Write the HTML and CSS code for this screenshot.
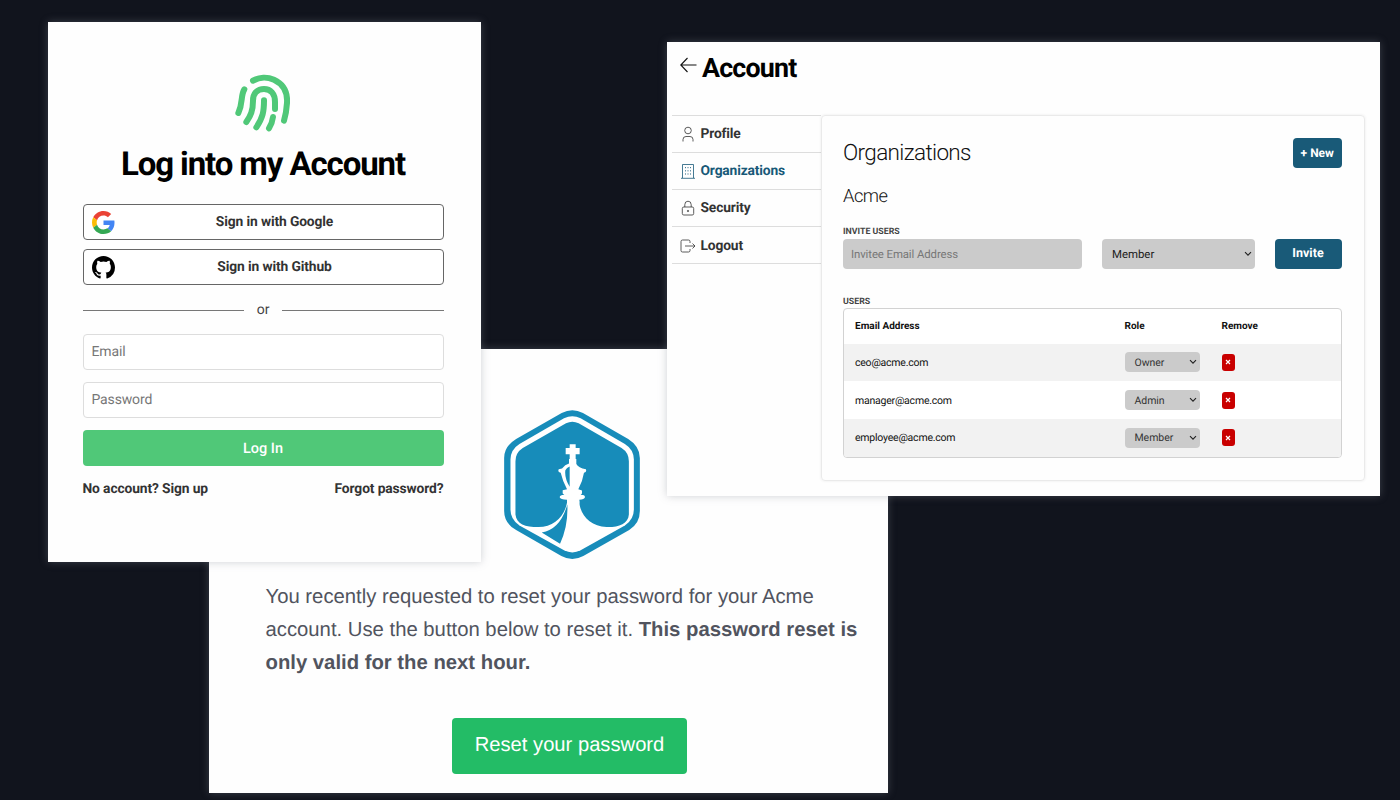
FILE: index.html
```html
<!DOCTYPE html>
<html lang="en">
<head>
<meta charset="utf-8">
<title>Account</title>
<link rel="stylesheet" href="styles.css">
</head>
<body>
<main class="canvas">
  <section class="window email">
    <svg class="email-logo" viewBox="40 28 412 454" aria-hidden="true">
      <path fill="#178cba" d="M215 40Q247 24 279 40L415 118Q450 140 450 175V335Q450 372 418 392L280 470Q247 488 214 470L78 392Q42 372 42 335V175Q42 140 78 118Z"/>
      <path fill="#fff" d="M222 56Q247 44 272 56L405 133Q432 150 432 180V330Q432 360 405 378L272 453Q247 466 222 453L88 378Q61 360 61 330V180Q61 150 88 133Z"/>
      <path fill="#178cba" d="M228 71Q247 61 266 71L395 145Q417 159 417 185V345C415 374 385 384 350 383C300 381 268 345 268 303H232C226 350 193 383 145 383C105 383 79 374 76 345V185Q76 159 98 145Z"/>
      <path fill="#fff" d="M239 134H257V145H269V164H257V178H259V193Q265 205 288 209Q291 217 282 220Q278 246 265 269L276 273V282L272 286Q285 286 285 293Q283 300 268 301V312H231V301Q211 300 209 293Q209 287 223 286L218 282V272L231 269Q218 246 212 220Q202 217 206 209L216 207Q225 195 237 192V178H239V164H227V145H239Z"/>
      <path fill="#178cba" d="M239 201V262Q223 235 226 212Q230 204 239 201ZM155 399Q211 390 232 315Q235 380 210 433Z"/>
    </svg>
    <p class="email-text">You recently requested to reset your password for your Acme<br>account. Use the button below to reset it. <strong>This password reset is<br>only valid for the next hour.</strong></p>
    <button class="reset">Reset your password</button>
  </section>

  <section class="window login">
    <svg class="fingerprint" viewBox="43 25 165 180" fill="none" stroke="#50c878" stroke-width="18" stroke-linecap="round" aria-hidden="true">
      <path d="M97 48C115 37 140 36 160 45C190 59 201 86 199 115Q197 145 190 168M71 74C59 94 68 112 53 145M163 133V112C163 87 150 73 130 73C108 73 97 88 97 108C97 138 90 153 77 172M130 107C130 140 127 158 107 188M157 157Q155 174 145 191"/>
    </svg>
    <h1 class="login-title">Log into my Account</h1>
    <button class="provider">
      <svg class="provider-icon" viewBox="0 0 48 48"><path fill="#ea4335" d="M24 9.5c3.54 0 6.71 1.22 9.21 3.6l6.85-6.85C35.9 2.38 30.47 0 24 0 14.62 0 6.51 5.38 2.56 13.22l7.98 6.19C12.43 13.72 17.74 9.5 24 9.5z"/><path fill="#4285f4" d="M46.98 24.55c0-1.57-.15-3.09-.38-4.55H24v9.02h12.94c-.58 2.96-2.26 5.48-4.78 7.18l7.73 6c4.51-4.18 7.09-10.36 7.09-17.65z"/><path fill="#fbbc05" d="M10.53 28.59A14.5 14.5 0 0 1 9.77 24c0-1.6.27-3.14.76-4.59l-7.98-6.19A23.9 23.9 0 0 0 0 24c0 3.88.92 7.54 2.56 10.78z"/><path fill="#34a853" d="M24 48c6.48 0 11.93-2.13 15.89-5.81l-7.73-6c-2.15 1.45-4.92 2.3-8.16 2.3-6.26 0-11.57-4.22-13.47-9.91l-7.98 6.19C6.51 42.62 14.62 48 24 48z"/></svg>
      <span>Sign in with Google</span>
    </button>
    <button class="provider">
      <svg class="provider-icon" viewBox="0 0 16 16"><path d="M8 0C3.58 0 0 3.58 0 8c0 3.54 2.29 6.53 5.47 7.59.4.07.55-.17.55-.38 0-.19-.01-.82-.01-1.49-2.01.37-2.53-.49-2.69-.94-.09-.23-.48-.94-.82-1.13-.28-.15-.68-.52-.01-.53.63-.01 1.08.58 1.23.82.72 1.21 1.87.87 2.33.66.07-.52.28-.87.51-1.07-1.78-.2-3.64-.89-3.64-3.95 0-.87.31-1.59.82-2.15-.08-.2-.36-1.02.08-2.12 0 0 .67-.21 2.2.82a7.6 7.6 0 0 1 4 0c1.53-1.04 2.2-.82 2.2-.82.44 1.1.16 1.92.08 2.12.51.56.82 1.27.82 2.15 0 3.07-1.87 3.75-3.65 3.95.29.25.54.73.54 1.48 0 1.07-.01 1.93-.01 2.2 0 .21.15.46.55.38A8.01 8.01 0 0 0 16 8c0-4.42-3.58-8-8-8z"/></svg>
      <span>Sign in with Github</span>
    </button>
    <div class="divider">or</div>
    <input class="field" placeholder="Email">
    <input class="field" placeholder="Password" type="password">
    <button class="submit">Log In</button>
    <div class="login-links"><a>No account? Sign up</a><a>Forgot password?</a></div>
  </section>

  <section class="window account">
    <header class="account-head">
      <svg class="back" viewBox="0 0 17 16" fill="none" stroke="#111" stroke-width="1.1"><path d="M16.5 8H1M7.5 1L.8 8l6.7 7"/></svg>
      <h2 class="account-title">Account</h2>
    </header>
    <div class="account-body">
      <nav class="menu">
        <a class="menu-item"><svg class="menu-icon" viewBox="0 0 16 16"><circle cx="8" cy="4.5" r="3.3"/><path d="M3 15.5v-2q0-3 3-3h4q3 0 3 3v2"/></svg>Profile</a>
        <a class="menu-item active"><svg class="menu-icon" viewBox="0 0 16 16"><path d="M2.5 15V1.5h11V15M1 15.3h14"/><path stroke-dasharray="1.2 2" d="M5.5 4v9M8 4v9M10.5 4v9"/></svg>Organizations</a>
        <a class="menu-item"><svg class="menu-icon" viewBox="0 0 16 16"><rect x="2.3" y="7" width="11.4" height="8" rx="1.5"/><path d="M4.8 7V4.7q0-3.5 3.2-3.5t3.2 3.5V7"/><circle cx="8" cy="11" r=".7"/></svg>Security</a>
        <a class="menu-item"><svg class="menu-icon" viewBox="0 0 16 16"><path d="M10 5V3.500Q10 2 8.500 2H2.500Q1 2 1 3.500V12.500Q1 14 2.500 14h6Q10 14 10 12.500V11M5 8h10M12.500 5.500L15 8l-2.500 2.500"/></svg>Logout</a>
      </nav>
      <div class="panel">
        <div class="panel-head"><h3 class="panel-title">Organizations</h3><button class="primary new">+ New</button></div>
        <h4 class="org-name">Acme</h4>
        <div class="label">INVITE USERS</div>
        <div class="invite">
          <input class="invite-email" placeholder="Invitee Email Address">
          <div class="select">Member<svg class="chevron" viewBox="0 0 8 6"><path d="M1 1.200l3 3 3-3"/></svg></div>
          <button class="primary send">Invite</button>
        </div>
        <div class="label users-label">USERS</div>
        <div class="table">
          <div class="row head"><span>Email Address</span><span>Role</span><span>Remove</span></div>
          <div class="row shaded"><span>ceo@acme.com</span><div class="select small">Owner<svg class="chevron" viewBox="0 0 8 6"><path d="M1 1.200l3 3 3-3"/></svg></div><button class="remove"><svg viewBox="0 0 6 6"><path d="M1 1l4 4M5 1L1 5"/></svg></button></div>
          <div class="row"><span>manager@acme.com</span><div class="select small">Admin<svg class="chevron" viewBox="0 0 8 6"><path d="M1 1.200l3 3 3-3"/></svg></div><button class="remove"><svg viewBox="0 0 6 6"><path d="M1 1l4 4M5 1L1 5"/></svg></button></div>
          <div class="row shaded"><span>employee@acme.com</span><div class="select small">Member<svg class="chevron" viewBox="0 0 8 6"><path d="M1 1.200l3 3 3-3"/></svg></div><button class="remove"><svg viewBox="0 0 6 6"><path d="M1 1l4 4M5 1L1 5"/></svg></button></div>
        </div>
      </div>
    </div>
  </section>
</main>
</body>
</html>
```
FILE: styles.css
```css
* { box-sizing: border-box; }
body { margin: 0; font-family: Roboto, "Liberation Sans", sans-serif; text-rendering: geometricPrecision; }
h1, h2, h3, h4, p { margin: 0; }
button, input { font-family: inherit; text-rendering: inherit; margin: 0; border: 0; padding: 0; }
svg { display: block; flex: none; }

.canvas { position: relative; width: 1400px; height: 800px; overflow: hidden; background: #11141d; }
.window { position: absolute; display: flex; flex-direction: column; background: #fefefe; box-shadow: 0 0 8px rgba(130, 135, 145, .38); }

/* Password reset email */
.email { left: 209px; top: 349px; width: 679px; height: 444px; padding: 60px 0 0 56.500px; font-family: "Liberation Sans", Arial, sans-serif; }
.email-logo { width: 138px; height: 151px; margin-left: 237px; }
.email-text { margin-top: 21px; font-size: 20.300px; line-height: 33px; color: #51545e; white-space: nowrap; }
.reset { width: 235px; height: 56px; margin: 38px 0 0 186.500px; border-radius: 4px; background: #23bc66; color: #fff; font-size: 20.200px; padding-bottom: 1px; }

/* Login */
.login { left: 47.500px; top: 22px; width: 433.500px; height: 540px; padding: 51px 37.500px 0 35px; }
.fingerprint { width: 55px; height: 60px; margin-left: 152px; }
.login-title { margin-top: 12px; height: 40px; line-height: 40px; font-size: 33px; letter-spacing: -1.100px; text-align: center; color: #000; }
.provider { display: flex; align-items: center; height: 36px; margin-top: 9px; padding: 0 8px; border: 1px solid #666; border-radius: 4px; background: #fff; color: #333; font-size: 13.800px; font-weight: 700; letter-spacing: -.120px; }
.login-title + .provider { margin-top: 19px; }
.provider-icon { width: 23px; height: 23px; }
.provider span { flex: 1; padding: 0 0 1px; text-align: center; }
.divider { display: flex; align-items: center; gap: 13px; height: 20px; margin: 15px 0 14px; font-size: 14px; color: #444; }
.divider::before, .divider::after { content: ""; flex: 1; height: 1px; background: #777; }
.field { height: 36px; margin-bottom: 12px; padding: 0 8px; border: 1px solid #ddd; border-radius: 4px; background: #fff; font-size: 14px; letter-spacing: -.150px; }
.field::placeholder { color: #777; }
.submit { height: 36px; border-radius: 4px; background: #50c878; color: #fff; font-size: 14.500px; font-weight: 500; }
.login-links { display: flex; justify-content: space-between; margin-top: 14px; font-size: 13.800px; line-height: 18px; font-weight: 700; letter-spacing: -.110px; color: #333; }

/* Account settings */
.account { left: 667px; top: 42px; width: 712.500px; height: 453.500px; padding: 0 15px 0 5px; }
.account-head { display: flex; height: 72.500px; padding: 8px 0 0 8px; gap: 5px; }
.back { width: 17px; height: 16px; margin-top: 6.500px; }
.account-title { margin-top: 1px; font-size: 26.800px; line-height: 34px; letter-spacing: -.800px; color: #000; }
.account-body { display: flex; height: 366px; }
.menu { width: 148.500px; border-top: 1px solid #ddd; }
.menu-item { display: flex; align-items: center; gap: 4.500px; height: 37.200px; padding: 1px 0 0 8px; border-bottom: 1px solid #ddd; font-size: 13.800px; font-weight: 700; letter-spacing: -.150px; color: #333; }
.menu-item.active { color: #185978; }
.menu-icon { width: 16px; height: 16px; fill: none; stroke: currentColor; stroke-width: .8; }
.panel { flex: 1; padding: 22px 22px 0 21.500px; border: 1px solid #eaeaea; border-radius: 4px; box-shadow: 0 0 3px rgba(0,0,0,.08); }
.panel-head { display: flex; justify-content: space-between; height: 30px; }
.panel-title { font-size: 22.500px; font-weight: 300; line-height: 31px; letter-spacing: -.650px; color: #111; }
.primary { border-radius: 4px; background: #195a78; color: #fff; font-size: 12.500px; font-weight: 700; }
.new { width: 48.500px; height: 30px; font-size: 12px; }
.org-name { margin-top: 17px; font-size: 18.300px; font-weight: 300; line-height: 24px; letter-spacing: -.500px; color: #111; }
.label { margin-top: 17.500px; height: 12px; font-size: 8.800px; line-height: 12px; font-weight: 700; color: #444; }
.invite { display: flex; gap: 20px; height: 30px; margin-top: .500px; }
.invite-email { flex: 1; min-width: 0; padding: 0 8px; border-radius: 4px; background: #cbcbcb; font-size: 11.400px; letter-spacing: -.100px; }
.invite-email::placeholder { color: #777; }
.select { display: flex; align-items: center; justify-content: space-between; width: 153px; padding: 0 3px 0 10.500px; border-radius: 4px; background: #cbcbcb; color: #222; font-size: 11.400px; }
.chevron { width: 8px; height: 6px; fill: none; stroke: #222; stroke-width: 1.100; }
.send { width: 67px; }
.users-label { margin-top: 27px; }
.table { margin-top: .500px; border: 1px solid #d2d2d2; border-radius: 4px; overflow: hidden; background: #fff; }
.row { display: grid; grid-template-columns: 269.500px 97px 1fr; align-items: center; height: 37.800px; padding-left: 11px; font-size: 10.500px; letter-spacing: -.220px; color: #111; }
.head { height: 34.500px; padding-top: 1px; font-size: 10px; font-weight: 700; letter-spacing: 0; }
.shaded { background: #f2f2f2; }
.small { width: 75px; height: 20px; padding-left: 10px; color: #333; font-size: 10.500px; letter-spacing: -.050px; }
.remove { display: grid; place-items: center; width: 13px; height: 17px; border-radius: 3px; background: #c90000; }
.remove svg { width: 6px; height: 6px; stroke: #fff; stroke-width: 1.200; }
```
